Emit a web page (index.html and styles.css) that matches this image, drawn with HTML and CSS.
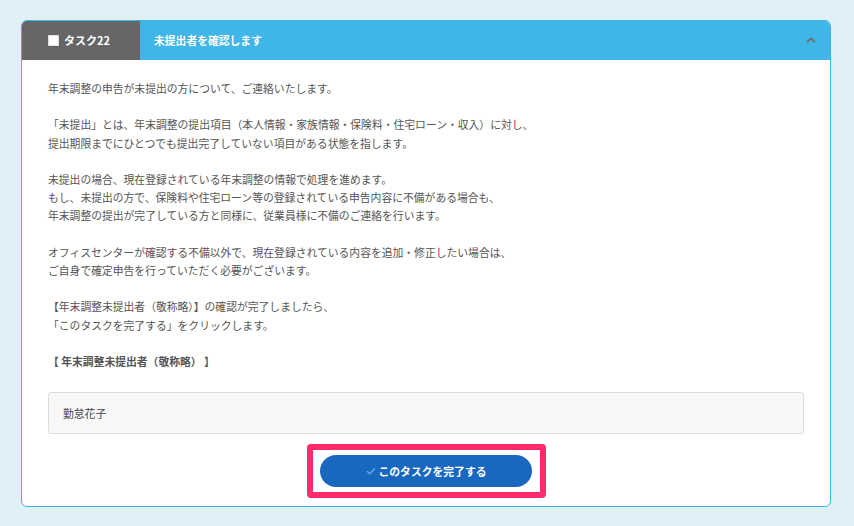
FILE: index.html
```html
<!DOCTYPE html>
<html lang="ja">
<head>
<meta charset="utf-8">
<title>タスク22</title>
<link rel="stylesheet" href="styles.css">
</head>
<body>
<div class="page">
  <section class="task-card">
    <header class="task-head">
      <div class="task-tab">
        <span class="task-check"></span>
        <span class="task-no">タスク22</span>
      </div>
      <div class="task-title">未提出者を確認します</div>
      <svg class="task-toggle" width="10" height="6" viewBox="0 0 10 6">
        <path d="M1 5.2 L5 1.4 L9 5.2" fill="none" stroke="#6b6b6b" stroke-width="1.8"/>
      </svg>
    </header>
    <div class="task-body">
      <p>年末調整の申告が未提出の方について、ご連絡いたします。</p>
      <p>「未提出」とは、年末調整の提出項目（本人情報・家族情報・保険料・住宅ローン・収入）に対し、<br>提出期限までにひとつでも提出完了していない項目がある状態を指します。</p>
      <p>未提出の場合、現在登録されている年末調整の情報で処理を進めます。<br>もし、未提出の方で、保険料や住宅ローン等の登録されている申告内容に不備がある場合も、<br>年末調整の提出が完了している方と同様に、従業員様に不備のご連絡を行います。</p>
      <p>オフィスセンターが確認する不備以外で、現在登録されている内容を追加・修正したい場合は、<br>ご自身で確定申告を行っていただく必要がございます。</p>
      <p>【年末調整未提出者（敬称略）】の確認が完了しましたら、<br>「このタスクを完了する」をクリックします。</p>
      <p class="list-label">【 年末調整未提出者（敬称略） 】</p>
      <div class="name-box">勤怠花子</div>
      <div class="action-row">
        <div class="action-frame">
          <button class="done-btn" type="button">
            <svg class="done-icon" width="10" height="8" viewBox="0 0 10 8">
              <path d="M1 4.2 L3.8 6.8 L9 1.2" fill="none" stroke="#52b6ea" stroke-width="1.3"/>
            </svg>
            <span>このタスクを完了する</span>
          </button>
        </div>
      </div>
    </div>
  </section>
</div>
</body>
</html>
```

FILE: styles.css
```css
* {
  box-sizing: border-box;
}

html, body {
  margin: 0;
  padding: 0;
  background: #dff0f7;
}

body {
  font-family: "Noto Sans CJK JP", "Noto Sans", sans-serif;
  color: #555;
  width: 854px;
  height: 526px;
  overflow: hidden;
}

.page {
  padding: 20px 23px 0 21px;
}

.task-card {
  width: 810px;
  background: #fff;
  border: 1px solid #41b4e5;
  border-radius: 6px;
  overflow: hidden;
}

.task-head {
  display: flex;
  align-items: center;
  height: 40px;
  background: #3fb6e7;
  margin: -1px -1px 0 -1px;
  position: relative;
}

.task-tab {
  width: 119px;
  height: 100%;
  background: #666;
  display: flex;
  align-items: center;
  padding-left: 27px;
  gap: 5px;
  color: #fff;
  font-weight: 700;
  font-size: 11px;
}

.task-check {
  width: 11px;
  height: 11px;
  background: #fff;
  border: 1px solid #ddd;
}

.task-title {
  padding-left: 14px;
  color: #fff;
  font-weight: 700;
  font-size: 10.8px;
  flex: 1;
}

.task-toggle {
  margin-right: 15px;
}

.task-body {
  padding: 19px 26px 8px 26px;
  font-size: 10.8px;
  line-height: 18.2px;
}

.task-body p {
  margin: 0 0 18.2px 0;
}

.task-body .list-label {
  font-weight: 700;
  margin-bottom: 22px;
}

.name-box {
  height: 42px;
  background: #f7f7f7;
  border: 1px solid #dcdcdc;
  border-radius: 3px;
  padding-left: 14px;
  display: flex;
  align-items: center;
  color: #444;
}

.action-row {
  display: flex;
  justify-content: center;
  margin-top: 10px;
}

.action-frame {
  width: 239px;
  height: 54px;
  border: 6px solid #ff2b6b;
  border-radius: 4px;
  display: flex;
  align-items: center;
  justify-content: center;
}

.done-btn {
  width: 212px;
  height: 32px;
  border: none;
  border-radius: 16px;
  background: #1a67c0;
  color: #fff;
  font-family: inherit;
  font-weight: 700;
  font-size: 10.8px;
  display: flex;
  align-items: center;
  justify-content: center;
  gap: 3px;
  padding: 0;
}
```
